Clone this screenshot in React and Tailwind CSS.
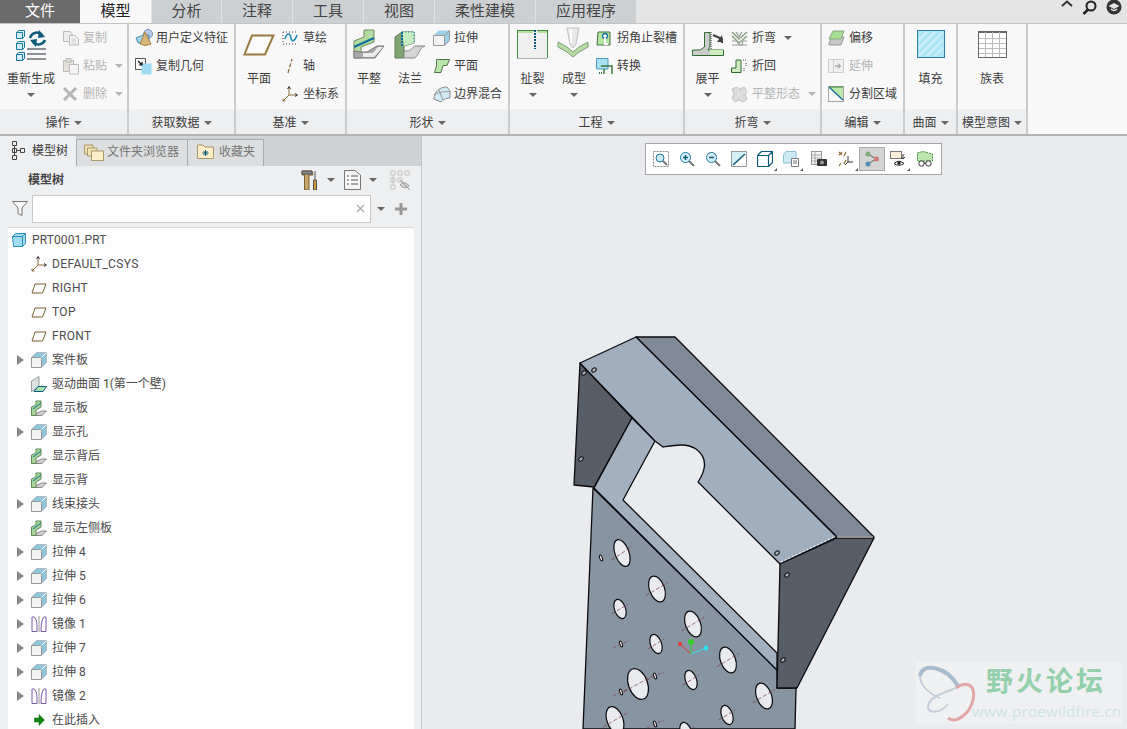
const FONT = { fontFamily: 'Roboto, "Noto Sans CJK SC", sans-serif' }

// icons, all drawn 1:1 in pixels
function Svg({ w, h, className = "", children }) {
  return <svg width={w} height={h} viewBox={`0 0 ${w} ${h}`} className={`block shrink-0 ${className}`} fill="none">{children}</svg>
}

const Caret = ({ className = "" }) => <span className={`inline-block w-0 h-0 border-l-[4px] border-r-[4px] border-t-[4px] border-l-transparent border-r-transparent border-t-[#666] ${className}`}></span>

const Cube = ({ x, y }) => (
  <g transform={`translate(${x} ${y})`}>
    <path d="M0.5 2.5 L2.5 0.5 H8.5 V6.5 L6.5 8.5 H0.5 Z" fill="#d6f0fa" stroke="#1a7a9c" />
    <path d="M0.5 2.5 H6.5 V8.5" stroke="#1a7a9c" />
  </g>
)

const RegenIcon = () => (
  <Svg w={32} h={34}>
    <Cube x={1} y={1} /><Cube x={1} y={12} /><Cube x={1} y={23} />
    <path d="M15 9 C17 3 24 2 27 6" stroke="#0d5a7a" strokeWidth="2.5" />
    <path d="M24 1 L30 8 L23 9 Z" fill="#0d5a7a" />
    <path d="M30 11 C28 16 21 17 18 13" stroke="#0d5a7a" strokeWidth="2.5" />
    <path d="M21 18 L15 11 L22 10 Z" fill="#0d5a7a" />
    <path d="M12 20 H31 M12 25 H31 M12 30 H31" stroke="#8d9196" strokeWidth="2" />
  </Svg>
)
const CopyIcon = () => (
  <Svg w={18} h={16}>
    <path d="M1.5 1.5 H8 L10 3.5 V11.5 H1.5 Z" fill="#eee" stroke="#bbb" />
    <path d="M7.5 5.5 H13 L16.5 8.5 V15 H7.5 Z" fill="#f4f4f4" stroke="#bbb" />
    <path d="M9.5 9 H14 M9.5 11 H14 M9.5 13 H14" stroke="#ccc" />
  </Svg>
)
const PasteIcon = () => (
  <Svg w={18} h={18}>
    <path d="M1.5 3.5 H11.5 V14.5 H1.5 Z" fill="#e4e1d8" stroke="#bbb" />
    <path d="M4 1.5 H9 V5 H4 Z" fill="#ddd" stroke="#bbb" />
    <path d="M7.5 7.5 H16.5 V17 H7.5 Z" fill="#f5f5f5" stroke="#bbb" />
  </Svg>
)
const DeleteIcon = () => (
  <Svg w={16} h={16}><path d="M2 2 L14 14 M14 2 L2 14" stroke="#b5b5b5" strokeWidth="3" /></Svg>
)
const UdfIcon = () => (
  <Svg w={20} h={18}>
    <circle cx="13" cy="5" r="4.5" fill="#b9c7e8" stroke="#7d8fbb" />
    <path d="M1 9 L8 6 H14 V14 H3 Z" fill="#9cd4ec" stroke="#4a8cab" />
    <path d="M10 3 L16 15 Q10 18 5 15 Z" fill="#d9b578" stroke="#a68648" />
  </Svg>
)
const CopyGeomIcon = () => (
  <Svg w={17} h={17}>
    <path d="M0.5 0.5 H10.5 V11.5 H0.5 Z" fill="#fff" stroke="#555" />
    <path d="M6.5 5.5 H16.5 V16.5 H6.5 Z" fill="#9fdcf2" />
    <path d="M3 3 L7 7 M7 4 V7 H4" stroke="#111" strokeWidth="1.2" />
  </Svg>
)
const PlaneLarge = () => (
  <Svg w={32} h={22} className="mt-[5px]">
    <path d="M9 1.5 H30.5 L22 20.5 H1.5 Z" fill="#fafafa" stroke="#97793f" strokeWidth="2" />
  </Svg>
)
const SketchIcon = () => (
  <Svg w={16} h={14}>
    <path d="M1 1 H15 M1 13 H15 M1 1 V13" stroke="#444" strokeDasharray="1 2" />
    <path d="M3 8 C5 1 8 2 9 7 C10 12 13 10 15 4" stroke="#1a8ab0" strokeWidth="1.5" />
  </Svg>
)
const AxisIcon = () => (
  <Svg w={16} h={16}><path d="M6 15 L10 1" stroke="#8a6d3a" strokeDasharray="4 2" strokeWidth="1.3" /></Svg>
)
const Csys = () => (
  <Svg w={16} h={16}>
    <path d="M7 9 V1 M7 9 H15 M7 9 L1 15" stroke="#8a6d3a" />
    <path d="M5.5 3 L7 0.5 L8.5 3 M13 7.5 L15.5 9 L13 10.5" stroke="#333" />
    <path d="M1 12.5 V15 H3.5" stroke="#8a6d3a" />
  </Svg>
)
const FlatLarge = () => (
  <Svg w={32} h={30}>
    <path d="M1 12 L11 8 V1 H21 V13 L8 18 V29 H1 Z" fill="#b5dca0" stroke="#6e8a63" />
    <path d="M1 18 L21 9" stroke="#0d6d9c" strokeWidth="2" />
    <path d="M1 22 V29 H22 L31 17 H24 L14 23 H8 L1 22 Z" fill="#a9a9a9" stroke="#777" />
    <path d="M10 24 H20 L25 18 H30 L21 28 H10 Z" fill="#ededed" />
  </Svg>
)
const FlangeLarge = () => (
  <Svg w={32} h={30}>
    <path d="M1 8 L8 3 H20 V14 L10 17 V29 H1 Z" fill="#7fa672" stroke="#5e7a55" />
    <path d="M8 3 H20 V14 L10 17 Z" fill="#c6ecc0" />
    <path d="M8 3 V17" stroke="#0d6d9c" strokeDasharray="2 1" strokeWidth="2" />
    <path d="M8 3 H20 V14" stroke="#0d6d9c" strokeDasharray="1 2" />
    <path d="M10 22 V29 H20 C24 29 25 18 31 17 H22 C18 17 18 23 10 22 Z" fill="#d5d5d5" stroke="#888" />
  </Svg>
)
const ExtrudeIcon = () => (
  <Svg w={17} h={16}>
    <path d="M0.5 5.5 L5.5 0.5 H16.5 V10.5 L11.5 15.5 Z" fill="#9cd0e8" />
    <path d="M0.5 5.5 H11.5 V15.5 H0.5 Z" fill="#f2f2f2" stroke="#999" />
    <path d="M11.5 5.5 L16.5 0.5 V10.5 L11.5 15.5" stroke="#999" />
  </Svg>
)
const TreeCube = () => (
  <Svg w={16} h={16}>
    <path d="M0.5 5.5 L5.5 0.5 H15.5 V10.5 L10.5 15.5 Z" fill="#8fc6df" />
    <path d="M0.5 5.5 H10.5 V15.5 H0.5 Z" fill="#f2f2f2" stroke="#999" />
    <path d="M0.5 5.5 L5.5 0.5 H15.5 V10.5 L10.5 15.5" stroke="#aab4ba" />
    <path d="M10.5 5.5 L15.5 0.5" stroke="#fff" />
  </Svg>
)
const FlatSmall = () => (
  <Svg w={17} h={14}>
    <path d="M3.5 0.5 H16.5 L14 6.5 H10 L8 13.5 H1.5 L3.5 7 Z" fill="#b7e6a6" stroke="#50704a" />
  </Svg>
)
const BlendIcon = () => (
  <Svg w={18} h={17}>
    <path d="M1 13 C1 6 6 1 14 1 L17 5 L17 12 C13 12 9 14 8 16 L1 13 Z" fill="#cfeaf4" stroke="#8a8a8a" />
    <path d="M6 4 L10 14 M1 9 C6 6 12 5 17 6" stroke="#9a9a9a" />
  </Svg>
)
const RipIcon = () => (
  <Svg w={31} h={30}>
    <path d="M0.5 29.5 V1 H30.5 V29.5 Z" fill="#f0f0f0" />
    <path d="M0.5 29.5 H30.5" stroke="#666" strokeDasharray="1 1" />
    <path d="M0 1.5 H17 M20 1.5 H31 M0.5 1 V29 M30.5 1 V29" stroke="#3f8a3f" />
    <path d="M1 3 H16 M21 3 H30" stroke="#b5e09f" strokeWidth="2" />
    <path d="M18 1 V20" stroke="#0d5a7a" strokeDasharray="2 1" strokeWidth="2" />
  </Svg>
)
const FormIcon = () => (
  <Svg w={32} h={32} className="-mt-[2px] -ml-[2px]">
    <path d="M10 1 H22 L19 17 L16 21 L13 17 Z" fill="#e8e8e8" stroke="#c0c0c0" />
    <path d="M14 2 V16" stroke="#fff" strokeWidth="2" />
    <path d="M1 15 L10 20 L16 25 L22 20 L31 15 V20 L22 25 L16 30 L10 25 L1 20 Z" fill="#b8dca6" stroke="#7d9e74" />
  </Svg>
)
const ReliefIcon = () => (
  <Svg w={15} h={15}>
    <path d="M2 1 H14 V14 H1 Z" fill="#b5e6a0" stroke="#477041" />
    <circle cx="9" cy="5" r="2.5" fill="#fff" stroke="#0d6d9c" strokeWidth="1.3" />
    <path d="M9 7 V13 H12" stroke="#fff" strokeWidth="2" />
  </Svg>
)
const ConvertIcon = () => (
  <Svg w={17} h={17}>
    <path d="M0.5 0.5 H12 V11 H0.5 Z" fill="#a8e0f4" stroke="#4b9bbb" />
    <path d="M5 8 H16 V16 M8 16 V11" stroke="#3c7a3c" strokeWidth="1.5" />
    <path d="M3 15 H6" stroke="#3c7a3c" strokeDasharray="1 1" strokeWidth="2" />
  </Svg>
)
const UnbendLarge = () => (
  <Svg w={32} h={26} className="mt-[2px]">
    <path d="M12.5 1.5 V16 L8 19 H0.5 V24.5 H31.5 V19 H16 L18 16 V1.5 Z" fill="#ccc" stroke="#2e6b2e" />
    <path d="M18 19 H31 V24 H18 Z" fill="#d0edc0" />
    <path d="M19 1 V18" stroke="#333" strokeDasharray="1 1" />
    <path d="M21 4 L30 8 V12" stroke="#444" strokeWidth="2" />
    <path d="M25 11 H31 L30 4 Z" fill="#444" />
  </Svg>
)
const BendIcon = () => (
  <Svg w={17} h={15}>
    <path d="M1 1 L8 8 L16 1 M1 5 L8 12 L16 5" stroke="#8aa080" strokeWidth="1.5" />
    <path d="M1 10 H6 L8 14 L11 14 L12 10 H16 M1 14 H16" stroke="#999" />
    <path d="M5 1 L8 6 L11 1" fill="#dfeeda" stroke="#888" />
  </Svg>
)
const BendBackIcon = () => (
  <Svg w={17} h={14}>
    <path d="M0.5 13.5 V9 H5 V1 H10 V13.5 Z" fill="#cfeabf" stroke="#2e6b2e" />
    <path d="M12 1 H15 M15 4 V7 M13 9 V13" stroke="#444" strokeDasharray="1 1" />
  </Svg>
)
const FlatStateIcon = () => (
  <Svg w={17} h={17}>
    <path d="M1 3 L6 1 L9 3 L13 1 L16 5 L14 9 L16 13 L12 16 L8 14 L4 16 L1 12 L3 8 Z" fill="#d9d9d9" stroke="#c0c0c0" />
    <path d="M6 1 L8 8 L16 5 M8 8 L4 16 M8 8 L12 16" stroke="#f2f2f2" strokeDasharray="2 1" />
  </Svg>
)
const OffsetIcon = () => (
  <Svg w={17} h={16}>
    <path d="M1 13 L4 7 H16 L13 15 H1 Z" fill="#c8c8c8" stroke="#999" />
    <path d="M1 9 L5 1 H16 L13 9 Z" fill="#a8dd94" stroke="#8aa882" />
  </Svg>
)
const ExtendIcon = () => (
  <Svg w={16} h={14}>
    <path d="M0.5 0.5 H15.5 V13.5 H0.5 Z" fill="#efefef" stroke="#ccc" />
    <path d="M5.5 0.5 V13.5" stroke="#ccc" />
    <path d="M7 7 H12 M10 4.5 L12.5 7 L10 9.5" stroke="#888" />
  </Svg>
)
const SplitIcon = () => (
  <Svg w={16} h={16}>
    <path d="M0.5 0.5 H15.5 V15.5 H0.5 Z" stroke="#555" strokeDasharray="1 1" />
    <path d="M1 1 H15 V14 Z" fill="#bde9a8" />
    <path d="M1 1 L15 14" stroke="#0d6d9c" strokeWidth="1.3" />
    <path d="M1 1 H15" stroke="#3f8a3f" />
  </Svg>
)
const FillIcon = () => (
  <Svg w={28} h={28} className="mt-px">
    <rect x="0.5" y="0.5" width="27" height="27" fill="#aee6f6" stroke="#2c7f9e" />
    <path d="M2 10 L10 2 M2 18 L18 2 M2 26 L26 2 M10 26 L26 10 M18 26 L26 18" stroke="#d9f3fb" strokeWidth="1.5" />
  </Svg>
)
const TableIcon = () => (
  <Svg w={29} h={27} className="mt-[2px]">
    <rect x="0.5" y="0.5" width="28" height="26" fill="#fff" stroke="#666" />
    <path d="M0 1.5 H29" stroke="#666" />
    <path d="M1 7.5 H28 M1 12.5 H28 M1 17.5 H28 M1 22.5 H28" stroke="#bbb" />
    <path d="M7.5 1 V26 M14.5 1 V26 M21.5 1 V26" stroke="#bbb" />
  </Svg>
)

const SmallBtn = ({ icon, label, disabled, caret }) => (
  <div className="h-7 flex items-center">
    <div className="w-[20px] flex justify-start">{icon}</div>
    <span className={`ml-px text-[12px] whitespace-nowrap ${disabled ? "text-[#b4b4b4]" : "text-[#3c3c3c]"}`}>{label}</span>
    {caret && <Caret className={`ml-2 ${disabled ? "border-t-[#b4b4b4]" : ""}`} />}
  </div>
)
const LargeBtn = ({ icon, label, caret, w }) => (
  <div className={`flex flex-col items-center ${w}`}>
    <div className="h-[41px] pt-[5px] flex items-start justify-center">{icon}</div>
    <span className="text-[12px] leading-[28px] h-[27px] whitespace-nowrap text-[#3c3c3c]">{label}</span>
    {caret && <Caret className="mt-[1px]" />}
  </div>
)
const Group = ({ w, label, children }) => (
  <div className={`${w} shrink-0 flex flex-col border-r-2 border-[#c9cbcc]`}>
    <div className="h-[87px] flex">{children}</div>
    <div className="h-[25px] pt-[2px] bg-[#eeeff0] flex items-center justify-center gap-1 text-[12px] text-[#3c3c3c]">
      {label}<Caret />
    </div>
  </div>
)

const tabs = [
  ["模型", "w-[71px] bg-[#f8f8f8] text-[#222]"],
  ["分析", "w-[70px]"], ["注释", "w-[71px]"], ["工具", "w-[71px]"], ["视图", "w-[71px]"],
  ["柔性建模", "w-[101px]"], ["应用程序", "w-[101px]"],
]

function Ribbon() {
  return (
    <>
      <div className="h-[23px] flex bg-[#e4e4e4]">
        <div className="w-[80px] bg-[#6b6b6b] text-white text-[15px] pb-px flex items-center justify-center">文件</div>
        {tabs.map(([t, c], i) => (
          <div key={t} className={`${c} ${i > 0 ? "bg-[#cdd0d2] text-[#444] border-l border-[#dfe1e2]" : ""} text-[15px] pb-px flex items-center justify-center`}>{t}</div>
        ))}
        <div className="ml-auto flex items-start gap-[9px] pr-[5px]">
          <svg width="12" height="8" viewBox="0 0 12 8" fill="none"><path d="M1 6 L6 1.5 L11 6" stroke="#333" strokeWidth="2" /></svg>
          <svg width="15" height="15" viewBox="0 0 15 15" fill="none"><circle cx="9" cy="6" r="4.5" stroke="#222" strokeWidth="2" /><path d="M6 9.5 L1.5 14" stroke="#222" strokeWidth="2.5" /></svg>
          <svg width="16" height="16" viewBox="0 0 16 16"><circle cx="8" cy="7" r="7.5" fill="#333" /><path d="M2.5 6 L8 3 L13.5 6 L8 9 Z" fill="#e4e4e4" /><path d="M5 9 Q8 12 11 9" stroke="#e4e4e4" strokeWidth="1.5" fill="none" /></svg>
        </div>
      </div>
      <div className="h-[113px] flex bg-[#f8f8f8] border-t border-[#c4c4c4] border-b-2 border-b-[#b4b4b4]">
        <Group w="w-[129px]" label="操作">
          <LargeBtn w="w-[62px]" icon={<RegenIcon />} label="重新生成" caret />
          <div><SmallBtn icon={<CopyIcon />} label="复制" disabled /><SmallBtn icon={<PasteIcon />} label="粘贴" disabled caret /><SmallBtn icon={<DeleteIcon />} label="删除" disabled caret /></div>
        </Group>
        <Group w="w-[107px]" label="获取数据">
          <div className="pl-[6px]"><SmallBtn icon={<UdfIcon />} label="用户定义特征" /><SmallBtn icon={<CopyGeomIcon />} label="复制几何" /></div>
        </Group>
        <Group w="w-[111px]" label="基准">
          <LargeBtn w="w-[46px]" icon={<PlaneLarge />} label="平面" />
          <div><SmallBtn icon={<SketchIcon />} label="草绘" /><SmallBtn icon={<AxisIcon />} label="轴" /><SmallBtn icon={<Csys />} label="坐标系" /></div>
        </Group>
        <Group w="w-[163px]" label="形状">
          <LargeBtn w="w-[44px]" icon={<FlatLarge />} label="平整" />
          <LargeBtn w="w-[38px]" icon={<FlangeLarge />} label="法兰" />
          <div className="pl-[4px]"><SmallBtn icon={<ExtrudeIcon />} label="拉伸" /><SmallBtn icon={<FlatSmall />} label="平面" /><SmallBtn icon={<BlendIcon />} label="边界混合" /></div>
        </Group>
        <Group w="w-[175px]" label="工程">
          <LargeBtn w="w-[45px]" icon={<RipIcon />} label="扯裂" caret />
          <LargeBtn w="w-[38px]" icon={<FormIcon />} label="成型" caret />
          <div className="pl-[3px]"><SmallBtn icon={<ReliefIcon />} label="拐角止裂槽" /><SmallBtn icon={<ConvertIcon />} label="转换" /></div>
        </Group>
        <Group w="w-[137px]" label="折弯">
          <LargeBtn w="w-[45px]" icon={<UnbendLarge />} label="展平" caret />
          <div className="pl-px"><SmallBtn icon={<BendIcon />} label="折弯" caret /><SmallBtn icon={<BendBackIcon />} label="折回" /><SmallBtn icon={<FlatStateIcon />} label="平整形态" disabled caret /></div>
        </Group>
        <Group w="w-[83px]" label="编辑">
          <div className="pl-[6px]"><SmallBtn icon={<OffsetIcon />} label="偏移" /><SmallBtn icon={<ExtendIcon />} label="延伸" disabled /><SmallBtn icon={<SplitIcon />} label="分割区域" /></div>
        </Group>
        <Group w="w-[53px]" label="曲面">
          <LargeBtn w="w-full" icon={<FillIcon />} label="填充" />
        </Group>
        <Group w="w-[70px]" label="模型意图">
          <LargeBtn w="w-full" icon={<TableIcon />} label="族表" />
        </Group>
      </div>
    </>
  )
}

// tree icons
const TreeTriangle = () => <span className="w-0 h-0 border-t-[5px] border-b-[5px] border-l-[7px] border-t-transparent border-b-transparent border-l-[#888]"></span>
const PartIcon = () => (
  <Svg w={14} h={14}>
    <path d="M0.5 3.5 L3.5 0.5 H13.5 V10.5 L10.5 13.5 H1.5 Z" fill="#9fdcf2" stroke="#2b8fb5" />
    <path d="M0.5 3.5 H10.5 V13.5 M10.5 3.5 L13.5 0.5" stroke="#2b8fb5" />
  </Svg>
)
const PlaneSmall = () => (
  <Svg w={16} h={11}><path d="M4 1 H15 L11.5 10 H1 Z" fill="#fff" stroke="#7a5f33" /></Svg>
)
const DriveIcon = () => (
  <Svg w={16} h={16}>
    <path d="M0.5 5 L8 0.5 V11 L0.5 15.5 Z" fill="#dde0e2" stroke="#9a9a9a" />
    <path d="M3 15.5 L7 10.5 H15.5 L12 15.5 Z" fill="#a8dfb0" stroke="#0d5a7a" />
  </Svg>
)
const WallIcon = () => (
  <Svg w={16} h={16}>
    <path d="M0.5 7 L5 5 V1 H10 V7 L5 10 V15.5 H0.5 Z" fill="#a8d69a" stroke="#5e8a55" />
    <path d="M2 9 L10 3" stroke="#0d6d9c" />
    <path d="M5 15.5 H11 L15.5 11 H11 L6 13 Z" fill="#d0d0d0" stroke="#888" />
  </Svg>
)
const MirrorIcon = () => (
  <Svg w={16} h={16}>
    <path d="M1 15.5 V1 H3 C6 3 6 8 6 15.5 Z M15 15.5 V1 H13 C11 3 10 8 10 15.5 Z" stroke="#7a5aa8" />
    <path d="M8 0 V16" stroke="#999" />
  </Svg>
)
const InsertArrow = () => (
  <Svg w={11} h={12} className="ml-[3px]"><path d="M0.5 4 H5 V0.5 L10.5 6 L5 11.5 V8 H0.5 Z" fill="#0f8a0f" stroke="#0a5c0a" strokeWidth="0.5" /></Svg>
)

const rows = [
  [Csys, "DEFAULT_CSYS"], [PlaneSmall, "RIGHT"], [PlaneSmall, "TOP"], [PlaneSmall, "FRONT"],
  [TreeCube, "案件板", 1], [DriveIcon, "驱动曲面 1(第一个壁)"], [WallIcon, "显示板"], [TreeCube, "显示孔", 1],
  [WallIcon, "显示背后"], [WallIcon, "显示背"], [TreeCube, "线束接头", 1], [WallIcon, "显示左侧板"],
  [TreeCube, "拉伸 4", 1], [TreeCube, "拉伸 5", 1], [TreeCube, "拉伸 6", 1], [MirrorIcon, "镜像 1", 1],
  [TreeCube, "拉伸 7", 1], [TreeCube, "拉伸 8", 1], [MirrorIcon, "镜像 2", 1], [InsertArrow, "在此插入"],
]

function ModelTree() {
  return (
    <div className="w-[422px] shrink-0 h-full flex flex-col bg-[#eeeff1] border-r border-[#c4c6c8] overflow-hidden">
      <div className="h-[30px] flex bg-[#cfd1d2] text-[12px] shrink-0">
        <div className="w-[76px] bg-[#eeeff1] flex items-center pl-[11px] pb-px gap-[7px] text-[#3c3c3c]">
          <Svg w={14} h={19}>
            <path d="M1.5 0.5 H5.5 V4.5 H1.5 Z M1.5 7.5 H5.5 V11.5 H1.5 Z M1.5 14.5 H5.5 V18.5 H1.5 Z M9.5 7.5 H13.5 V11.5 H9.5 Z M3.5 4.5 V14.5 M5.5 9.5 H9.5" stroke="#444" />
          </Svg>
          模型树
        </div>
        <div className="w-[112px] bg-[#dcdedf] border border-[#a9abad] border-b-0 mt-[3px] flex items-center pl-[7px] pb-[3px] gap-[3px] text-[#777]">
          <Svg w={20} h={18}>
            <path d="M0.5 2 H9 V11 H0.5 Z" fill="#f4e2b4" stroke="#a89868" />
            <path d="M3.5 5 H13 V13 H3.5 Z" fill="#f4e2b4" stroke="#a89868" />
            <path d="M7.5 8 H19.5 V17.5 H7.5 Z" fill="#fbeec8" stroke="#a89868" />
          </Svg>
          文件夹浏览器
        </div>
        <div className="w-[76px] bg-[#dcdedf] border border-l-0 border-[#a9abad] border-b-0 mt-[3px] flex items-center pl-[9px] pb-[3px] gap-[5px] text-[#777]">
          <Svg w={17} h={15}>
            <path d="M0.5 1 H6 L8 3 H16.5 V14.5 H0.5 Z" fill="#fbeec8" stroke="#a89868" />
            <path d="M8.5 6 V12 M5.5 9 H11.5 M6.5 7 L10.5 11 M10.5 7 L6.5 11" stroke="#0d5a7a" />
          </Svg>
          收藏夹
        </div>
      </div>
      <div className="h-[28px] flex items-center shrink-0 pl-[28px] text-[12px] font-bold text-[#444]">
        模型树
        <div className="ml-auto flex items-center pr-[11px]">
          <Svg w={17} h={20}>
            <path d="M1 1 H11 L12 5 H8 V20 H3.5 V5 H1 Z" fill="#c9a468" stroke="#7a6238" />
            <path d="M1 1 H11 V4 H1 Z" fill="#888" stroke="#555" />
            <path d="M14 1 V10 M12.5 10 H15.5 V20 H12.5 Z" stroke="#555" fill="#d0972e" />
          </Svg>
          <Caret className="ml-[9px]" />
          <Svg w={17} h={20} className="ml-[9px]">
            <path d="M0.5 0.5 H11 L16.5 5 V19.5 H0.5 Z" fill="#f6f6f6" stroke="#777" />
            <path d="M3 6 H5 M7 6 H14 M3 10 H5 M7 10 H14 M3 14 H5 M7 14 H14" stroke="#555" />
          </Svg>
          <Caret className="ml-[8px]" />
          <Svg w={20} h={20} className="ml-[13px]">
            <path d="M1 1 H5 V5 H1 Z M8 1 H12 V5 H8 Z M15 1 H19 V5 H15 Z M1 8 H5 V12 H1 Z M8 8 H12 V12 H8 Z M1 15 H5 V19 H1 Z M3 5 V15" stroke="#c4c4c4" />
            <path d="M10 15 Q15 10 19 16 Q15 20 10 15 Z" fill="#d4d4d4" stroke="#999" />
            <path d="M10 10 L20 20" stroke="#999" />
          </Svg>
        </div>
      </div>
      <div className="h-[29px] flex items-center shrink-0 pl-[12px]">
        <Svg w={16} h={15}><path d="M0.5 0.5 H15.5 L10 7 V14.5 L6 12.5 V7 Z" fill="#f6f6f6" stroke="#777" /></Svg>
        <div className="ml-[4px] w-[339px] h-[28px] bg-white border border-[#c8c8c8] flex items-center justify-end pr-[5px]">
          <svg width="9" height="9" viewBox="0 0 9 9" fill="none"><path d="M1 1 L8 8 M8 1 L1 8" stroke="#aaa" strokeWidth="1.2" /></svg>
        </div>
        <Caret className="ml-[6px]" />
        <svg className="ml-[10px]" width="12" height="12" viewBox="0 0 12 12"><path d="M6 0 V12 M0 6 H12" stroke="#999" strokeWidth="3" /></svg>
      </div>
      <div className="ml-[8px] w-[406px] flex-1 bg-[#fdfdfd] border-t border-[#d6d8d9] mt-[4px] text-[12px] text-[#4c4c4c]">
        <div className="h-6 flex items-center pl-[4px] gap-[6px]"><PartIcon /><span className="tracking-[0.1px]">PRT0001.PRT</span></div>
        {rows.map(([Icon, text, expand]) => (
          <div key={text} className="h-6 flex items-center">
            <div className="w-[24px] pl-[9px] flex items-center">{expand && <TreeTriangle />}</div>
            <div className="w-[20px] -ml-px mr-px flex justify-start"><Icon /></div>
            <span className={`whitespace-pre ${/^[A-Z_]+$/.test(text) ? "tracking-[0.35px]" : ""}`}>{text}</span>
          </div>
        ))}
      </div>
    </div>
  )
}

const ViewIcons = [
  <svg width="16" height="16" viewBox="0 0 16 16" fill="none"><rect x="0.5" y="0.5" width="15" height="15" stroke="#888" strokeDasharray="2 1" /><circle cx="7" cy="7" r="4" fill="#cfeaf4" stroke="#1a7a9c" /><path d="M10 10 L14 14" stroke="#777" strokeWidth="2" /></svg>,
  <svg width="16" height="16" viewBox="0 0 16 16" fill="none"><circle cx="6.5" cy="6.5" r="5" fill="#d6f0fa" stroke="#1a7a9c" /><path d="M6.5 4 V9 M4 6.5 H9" stroke="#0d5a7a" strokeWidth="1.5" /><path d="M10 10 L15 15" stroke="#777" strokeWidth="2" /></svg>,
  <svg width="16" height="16" viewBox="0 0 16 16" fill="none"><circle cx="6.5" cy="6.5" r="5" fill="#d6f0fa" stroke="#1a7a9c" /><path d="M4 6.5 H9" stroke="#0d5a7a" strokeWidth="1.5" /><path d="M10 10 L15 15" stroke="#777" strokeWidth="2" /></svg>,
  <svg width="16" height="16" viewBox="0 0 16 16" fill="none"><rect x="0.5" y="0.5" width="15" height="15" fill="#d4eef6" stroke="#999" /><path d="M15 1 V15 H1 Z" fill="#fff" /><path d="M2 14 L14 3" stroke="#0d5a7a" strokeWidth="1.5" /></svg>,
  <svg width="16" height="16" viewBox="0 0 16 16" fill="none"><path d="M0.5 4.5 L4.5 0.5 H15.5 V11.5 L11.5 15.5 H0.5 Z M0.5 4.5 H11.5 V15.5 M11.5 4.5 L15.5 0.5" stroke="#0d5a7a" strokeWidth="1.2" /></svg>,
  <svg width="16" height="16" viewBox="0 0 16 16" fill="none"><path d="M0.5 3.5 L3 0.5 H13 V12 H0.5 Z" fill="#cde9f4" stroke="#8fc0d4" /><path d="M8.5 7.5 H15.5 V15.5 H8.5 Z" fill="#fff" stroke="#777" /><path d="M10 10 H14 M10 12 H14" stroke="#777" /></svg>,
  <svg width="16" height="16" viewBox="0 0 16 16" fill="none"><rect x="0.5" y="0.5" width="10" height="13" fill="#f3f3f3" stroke="#999" /><path d="M1 4 H10 M1 7 H10 M1 10 H10 M4 1 V13" stroke="#aaa" /><rect x="6" y="8" width="10" height="7" rx="1" fill="#333" /><circle cx="11" cy="11.5" r="2" fill="#999" /></svg>,
  <svg width="16" height="16" viewBox="0 0 16 16" fill="none"><path d="M1 1 L4 4 M4 1 L1 4 M8 1 L6 5 M6 13 L8 9 M1 15 L3 12" stroke="#8a6d3a" strokeWidth="1.2" /><path d="M10 5 V11 H15 M10 11 L7 14" stroke="#333" /></svg>,
  <svg width="16" height="16" viewBox="0 0 16 16" fill="none"><path d="M4 3 L12 8 L4 13" stroke="#555" /><circle cx="4" cy="3" r="2.5" fill="#7fae7a" /><circle cx="12.5" cy="8" r="2.5" fill="#d47a7a" /><circle cx="4" cy="13" r="2.5" fill="#4f8fb5" /></svg>,
  <svg width="16" height="16" viewBox="0 0 16 16" fill="none"><rect x="0.5" y="0.5" width="11" height="7" fill="#f7efd8" stroke="#777" /><path d="M13 3 V8 M11 6 L13 8 L15 6" stroke="#333" /><path d="M4 12.5 Q9 8 14 12.5 Q9 16 4 12.5 Z" fill="#fff" stroke="#222" /><circle cx="9" cy="12" r="1.7" fill="#222" /></svg>,
  <svg width="16" height="16" viewBox="0 0 16 16" fill="none"><path d="M0.5 2 L6 0.5 L15.5 3 V10 H0.5 Z" fill="#bfe6ae" stroke="#3f8a3f" strokeDasharray="2 1" /><circle cx="4.5" cy="12.5" r="2.7" fill="#fff" stroke="#333" /><circle cx="11.5" cy="12.5" r="2.7" fill="#fff" stroke="#333" /><path d="M7 12 H9" stroke="#333" /></svg>,
]
const toolbarExtra = ["", "", "", "", "", "", "ml-[2px]", "ml-px", "", "", "ml-px"]
const hasCorner = [4, 5, 7, 9]

function ViewToolbar() {
  return (
    <div className="absolute left-[223px] top-[7px] w-[297px] h-[32px] bg-white border border-[#a4a4a4] flex items-center pl-[2px]">
      {ViewIcons.map((ic, i) => (
        <div key={i} className={`relative w-[26px] h-[24px] flex items-center justify-center ${toolbarExtra[i]} ${i === 8 ? "bg-[#d4d4d4] border border-[#aaa]" : ""}`}>
          {ic}
          {hasCorner.includes(i) && <span className="absolute right-[1px] bottom-0 w-0 h-0 border-l-[3px] border-t-[3px] border-l-transparent border-t-transparent border-b-0 border-r-[3px] border-r-[#555]"></span>}
        </div>
      ))}
    </div>
  )
}

const holes = [
  [622, 553, 7, 14], [657, 589, 7.5, 13.5], [620, 609, 5.5, 10], [693, 624, 7.5, 13.5], [656, 644, 5.5, 10],
  [728, 660, 7.5, 13.5], [638, 684, 9.5, 16], [691, 680, 5.5, 10], [764, 696, 7.5, 13.5], [615, 720, 8, 14],
  [727, 715, 5.5, 10], [686, 732, 5.5, 10],
]
const slots = [[601, 558], [621, 644], [655, 676], [621, 692], [655, 724]]
const screws = [[594, 370], [584, 373], [581, 459], [787, 575], [783, 660], [777, 553]]

function PartModel() {
  return (
    <svg width="705" height="593" viewBox="422 136 705 593" className="block" fill="none" strokeLinejoin="round">
      <g stroke="#0b0b0f" strokeWidth="1.3">
        <path d="M580 363 L632 418 L594 487 L574 485 Z" fill="#575e68" />
        <path d="M636 337 H675 L874 537 L837 537 Z" fill="#7f8a96" />
        <path d="M593 488 L777 670 V688 H796 L795 729 H583 Z" fill="#8794a2" />
        <path d="M632 418 L655 441 L623 500 L777 653 V670 L594 488 Z" fill="#a3b0c0" />
        <path d="M580 363 L636 337 L837 537 L780 564 L698 482 C706 470 708 458 696 449 C686 443 676 445 663 447 L655 441 Z" fill="#a0aebe" />
        <path d="M780 564 L837 538 H874 L797 688 H777 Z" fill="#575e68" />
      </g>
      <path d="M781 562 L836 536" stroke="#fff" strokeDasharray="2 2" />
      <path d="M837 537 H873" stroke="#fff" />
      <path d="M638 339 L838 539" stroke="#0b0b0f" strokeWidth="0.6" />
      {holes.map(([x, y, rx, ry]) => (
        <g key={`${x}-${y}`}>
          <ellipse cx={x} cy={y} rx={rx} ry={ry} transform={`rotate(-20 ${x} ${y})`} fill="#e9ebef" stroke="#0b0b0f" strokeWidth="1.2" />
          <path d={`M${x - rx * 1.5} ${y + ry * 0.5} L${x + rx * 1.5} ${y - ry * 0.5}`} stroke="#7a3a44" strokeWidth="0.7" strokeDasharray="4 2" />
        </g>
      ))}
      {slots.map(([x, y]) => (
        <g key={`${x}-${y}`}>
          <ellipse cx={x} cy={y} rx="1.3" ry="3" transform={`rotate(-20 ${x} ${y})`} fill="#e9ebef" stroke="#0b0b0f" />
          {x !== 601 && <path d={`M${x - 8} ${y + 4} L${x + 9} ${y - 4}`} stroke="#7a3a44" strokeWidth="0.7" strokeDasharray="3 3" />}
        </g>
      ))}
      {screws.map(([x, y]) => (
        <ellipse key={`${x}-${y}`} cx={x} cy={y} rx="2.5" ry="1.8" transform={`rotate(-40 ${x} ${y})`} fill="#aeb4bc" stroke="#0b0b0f" />
      ))}
      <path d="M691 654 L680 644" stroke="#f03030" />
      <path d="M691 654 V642" stroke="#30d030" />
      <path d="M691 654 L706 648" stroke="#30e0e8" />
      <circle cx="680" cy="644" r="2" fill="#f03030" />
      <circle cx="691" cy="642" r="3" fill="#30d030" />
      <circle cx="706" cy="648" r="2.5" fill="#30e0e8" />
    </svg>
  )
}

function Watermark() {
  return (
    <div className="absolute right-[5px] bottom-[5px] w-[206px] h-[62px] bg-[#eff0f2] flex">
      <svg width="60" height="62" viewBox="0 0 60 62" fill="none" className="shrink-0">
        <path d="M4 14 C6 0 30 4 42 24" stroke="#a9bccd" strokeWidth="4" />
        <path d="M4 14 C4 24 14 32 24 36" stroke="#b8c6d3" strokeWidth="1.5" />
        <path d="M40 26 C52 18 60 24 57 38 C54 52 40 62 32 56" stroke="#e3a4a6" strokeWidth="3" />
        <path d="M40 26 C30 30 14 34 12 44 C11 52 24 52 32 42" stroke="#c4ced8" strokeWidth="2" />
      </svg>
      <div className="flex flex-col items-start -ml-[2px]">
        <span className="text-[27px] leading-[41px] font-bold text-[#93d0ab] tracking-[3px] pl-[12px] whitespace-nowrap">野火论坛</span>
        <span className="text-[15px] leading-[17px] text-[#cde3e2] -ml-[2px] tracking-[0.3px] whitespace-nowrap" style={{ fontFamily: '"Open Sans", sans-serif' }}>www.proewildfire.cn</span>
      </div>
    </div>
  )
}

export default function App() {
  return (
    <div className="w-[1127px] h-[729px] overflow-hidden flex flex-col bg-[#e9ebef]" style={FONT}>
      <Ribbon />
      <div className="flex-1 flex min-h-0">
        <ModelTree />
        <div className="relative flex-1 overflow-hidden">
          <div className="absolute right-0 bottom-0"><PartModel /></div>
          <ViewToolbar />
          <Watermark />
        </div>
      </div>
    </div>
  )
}
